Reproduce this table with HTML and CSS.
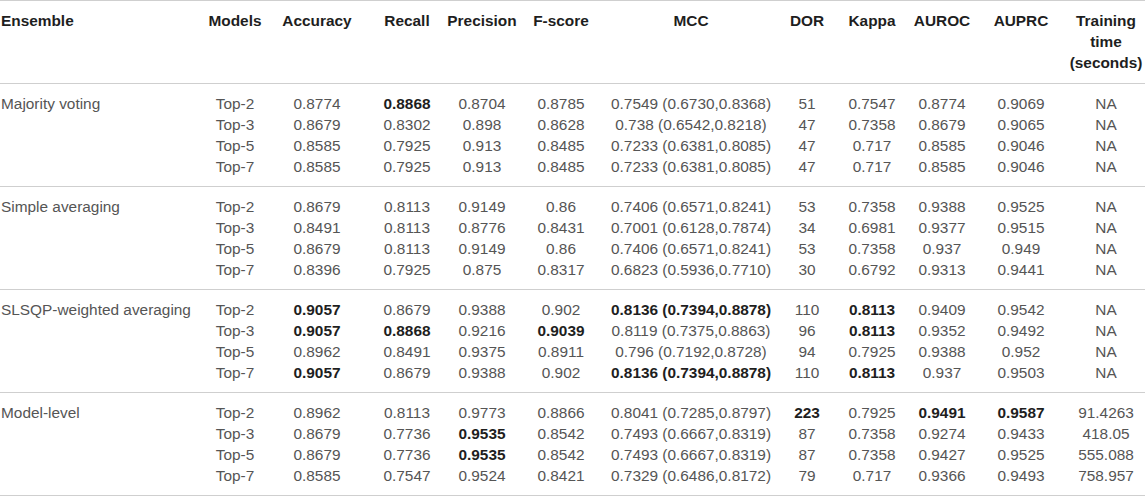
FILE: index.html
```html
<!DOCTYPE html>
<html lang="en">
<head>
    <meta charset="UTF-8">
    <title>Ensemble results</title>
    <link rel="stylesheet" href="styles.css">
</head>
<body>
    <table class="results">
        <colgroup>
            <col class="c-ens"><col class="c-models"><col class="c-acc"><col class="c-rec">
            <col class="c-prec"><col class="c-f"><col class="c-mcc"><col class="c-dor">
            <col class="c-kappa"><col class="c-auroc"><col class="c-auprc"><col class="c-time">
        </colgroup>
        <thead>
            <tr>
                <th class="name">Ensemble</th>
                <th>Models</th>
                <th>Accuracy</th>
                <th>Recall</th>
                <th>Precision</th>
                <th>F-score</th>
                <th>MCC</th>
                <th>DOR</th>
                <th>Kappa</th>
                <th>AUROC</th>
                <th>AUPRC</th>
                <th>Training time (seconds)</th>
            </tr>
        </thead>

        <!-- Majority voting -->
        <tbody>
            <tr><td class="name">Majority voting</td><td>Top-2</td><td>0.8774</td><td><b>0.8868</b></td><td>0.8704</td><td>0.8785</td><td>0.7549 (0.6730,0.8368)</td><td>51</td><td>0.7547</td><td>0.8774</td><td>0.9069</td><td>NA</td></tr>
            <tr><td class="name"></td><td>Top-3</td><td>0.8679</td><td>0.8302</td><td>0.898</td><td>0.8628</td><td>0.738 (0.6542,0.8218)</td><td>47</td><td>0.7358</td><td>0.8679</td><td>0.9065</td><td>NA</td></tr>
            <tr><td class="name"></td><td>Top-5</td><td>0.8585</td><td>0.7925</td><td>0.913</td><td>0.8485</td><td>0.7233 (0.6381,0.8085)</td><td>47</td><td>0.717</td><td>0.8585</td><td>0.9046</td><td>NA</td></tr>
            <tr><td class="name"></td><td>Top-7</td><td>0.8585</td><td>0.7925</td><td>0.913</td><td>0.8485</td><td>0.7233 (0.6381,0.8085)</td><td>47</td><td>0.717</td><td>0.8585</td><td>0.9046</td><td>NA</td></tr>
        </tbody>

        <!-- Simple averaging -->
        <tbody>
            <tr><td class="name">Simple averaging</td><td>Top-2</td><td>0.8679</td><td>0.8113</td><td>0.9149</td><td>0.86</td><td>0.7406 (0.6571,0.8241)</td><td>53</td><td>0.7358</td><td>0.9388</td><td>0.9525</td><td>NA</td></tr>
            <tr><td class="name"></td><td>Top-3</td><td>0.8491</td><td>0.8113</td><td>0.8776</td><td>0.8431</td><td>0.7001 (0.6128,0.7874)</td><td>34</td><td>0.6981</td><td>0.9377</td><td>0.9515</td><td>NA</td></tr>
            <tr><td class="name"></td><td>Top-5</td><td>0.8679</td><td>0.8113</td><td>0.9149</td><td>0.86</td><td>0.7406 (0.6571,0.8241)</td><td>53</td><td>0.7358</td><td>0.937</td><td>0.949</td><td>NA</td></tr>
            <tr><td class="name"></td><td>Top-7</td><td>0.8396</td><td>0.7925</td><td>0.875</td><td>0.8317</td><td>0.6823 (0.5936,0.7710)</td><td>30</td><td>0.6792</td><td>0.9313</td><td>0.9441</td><td>NA</td></tr>
        </tbody>

        <!-- SLSQP-weighted averaging -->
        <tbody>
            <tr><td class="name">SLSQP-weighted averaging</td><td>Top-2</td><td><b>0.9057</b></td><td>0.8679</td><td>0.9388</td><td>0.902</td><td><b>0.8136 (0.7394,0.8878)</b></td><td>110</td><td><b>0.8113</b></td><td>0.9409</td><td>0.9542</td><td>NA</td></tr>
            <tr><td class="name"></td><td>Top-3</td><td><b>0.9057</b></td><td><b>0.8868</b></td><td>0.9216</td><td><b>0.9039</b></td><td>0.8119 (0.7375,0.8863)</td><td>96</td><td><b>0.8113</b></td><td>0.9352</td><td>0.9492</td><td>NA</td></tr>
            <tr><td class="name"></td><td>Top-5</td><td>0.8962</td><td>0.8491</td><td>0.9375</td><td>0.8911</td><td>0.796 (0.7192,0.8728)</td><td>94</td><td>0.7925</td><td>0.9388</td><td>0.952</td><td>NA</td></tr>
            <tr><td class="name"></td><td>Top-7</td><td><b>0.9057</b></td><td>0.8679</td><td>0.9388</td><td>0.902</td><td><b>0.8136 (0.7394,0.8878)</b></td><td>110</td><td><b>0.8113</b></td><td>0.937</td><td>0.9503</td><td>NA</td></tr>
        </tbody>

        <!-- Model-level -->
        <tbody>
            <tr><td class="name">Model-level</td><td>Top-2</td><td>0.8962</td><td>0.8113</td><td>0.9773</td><td>0.8866</td><td>0.8041 (0.7285,0.8797)</td><td><b>223</b></td><td>0.7925</td><td><b>0.9491</b></td><td><b>0.9587</b></td><td>91.4263</td></tr>
            <tr><td class="name"></td><td>Top-3</td><td>0.8679</td><td>0.7736</td><td><b>0.9535</b></td><td>0.8542</td><td>0.7493 (0.6667,0.8319)</td><td>87</td><td>0.7358</td><td>0.9274</td><td>0.9433</td><td>418.05</td></tr>
            <tr><td class="name"></td><td>Top-5</td><td>0.8679</td><td>0.7736</td><td><b>0.9535</b></td><td>0.8542</td><td>0.7493 (0.6667,0.8319)</td><td>87</td><td>0.7358</td><td>0.9427</td><td>0.9525</td><td>555.088</td></tr>
            <tr><td class="name"></td><td>Top-7</td><td>0.8585</td><td>0.7547</td><td>0.9524</td><td>0.8421</td><td>0.7329 (0.6486,0.8172)</td><td>79</td><td>0.717</td><td>0.9366</td><td>0.9493</td><td>758.957</td></tr>
        </tbody>
    </table>
</body>
</html>
```

FILE: styles.css
```css
/* Page */
body {
    margin: 0;
    background: #fff;
    font-family: "Liberation Sans", Arial, sans-serif;
    font-size: 15.4px;
}

/* Table */
.results {
    width: 1145px;
    table-layout: fixed;
    border-collapse: collapse;
    color: #555;
}

.c-ens { width: 205px; }
.c-models { width: 60px; }
.c-acc { width: 104px; }
.c-rec { width: 76px; }
.c-prec { width: 74px; }
.c-f { width: 84px; }
.c-mcc { width: 176px; }
.c-dor { width: 56px; }
.c-kappa { width: 74px; }
.c-auroc { width: 66px; }
.c-auprc { width: 92px; }
.c-time { width: 78px; }

.results th,
.results td {
    padding: 0;
    line-height: 21px;
    text-align: center;
    vertical-align: top;
    white-space: nowrap;
}

.results th {
    color: #1e1e1e;
    font-weight: bold;
    padding: 9px 0 10px;
    white-space: normal;
}

.results thead tr {
    border-top: 1px solid #cfcfcf;
}

.results .name {
    text-align: left;
    padding-left: 1px;
}

/* Groups */
.results tbody {
    border-top: 1px solid #cfcfcf;
}

.results tbody:last-child {
    border-bottom: 1px solid #cfcfcf;
}

.results tbody tr:first-child td {
    padding-top: 9px;
}

.results tbody tr:last-child td {
    padding-bottom: 9px;
}

.results b {
    color: #1e1e1e;
}
```
